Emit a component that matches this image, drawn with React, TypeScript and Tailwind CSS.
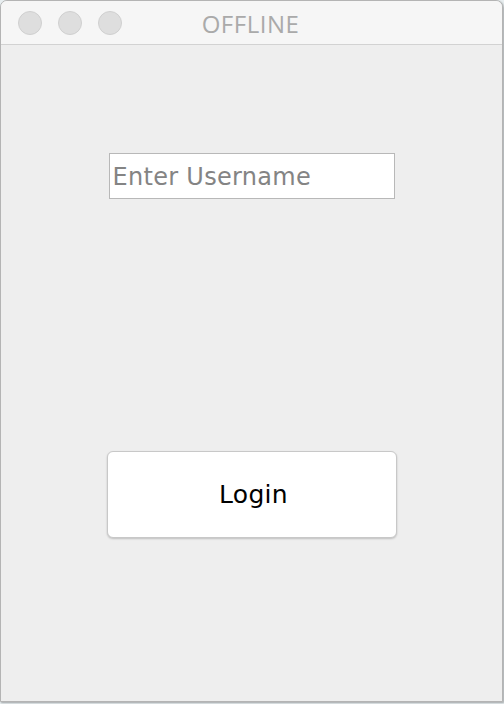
import React from 'react';

const TrafficLight: React.FC = () => (
  <span className="block w-[24px] h-[24px] rounded-full bg-[#dedede] border border-[#d0d0d0]" />
);

export default function App() {
  return (
    <div className="w-[504px] h-[704px] bg-[#e8eef0] overflow-hidden" style={{ fontFamily: '"DejaVu Sans", "Liberation Sans", sans-serif' }}>
      <div className="w-[503px] h-[702px] flex flex-col rounded-t-[7px] border border-[#b4b4b4] bg-[#eeeeee] shadow-[1px_1px_2px_rgba(0,0,0,0.3)] overflow-hidden">
        {/* Title bar */}
        <div className="relative h-[44px] shrink-0 flex items-center bg-[#f6f6f6] border-b border-[#d2d2d2]">
          <div className="flex items-center gap-[16px] pl-[17px]">
            <TrafficLight />
            <TrafficLight />
            <TrafficLight />
          </div>
          <div className="absolute left-0 right-0 top-0 h-[44px] flex items-center justify-center pr-[2px] pt-[1px] text-[24px] text-[#aaaaaa] tracking-[0.5px]" style={{ fontFamily: '"Open Sans", "DejaVu Sans", sans-serif' }}>
            OFFLINE
          </div>
        </div>

        {/* Body */}
        <div className="flex-1 flex flex-col items-center">
          <div className="mt-[108px] w-[286px] h-[46px] bg-white border border-[#b8b8b8] flex items-center pl-[3px] pt-[2px]">
            <span className="text-[24px] text-[#848484] tracking-[0.3px]">Enter Username</span>
          </div>

          <button className="mt-[252px] w-[290px] h-[87px] bg-white rounded-[6px] border border-[#c8c8c8] shadow-[0_1px_2px_rgba(0,0,0,0.2)] flex items-center justify-center pl-[4px] text-[25px] text-black tracking-[0.3px]">
            Login
          </button>
        </div>
      </div>
    </div>
  );
}
